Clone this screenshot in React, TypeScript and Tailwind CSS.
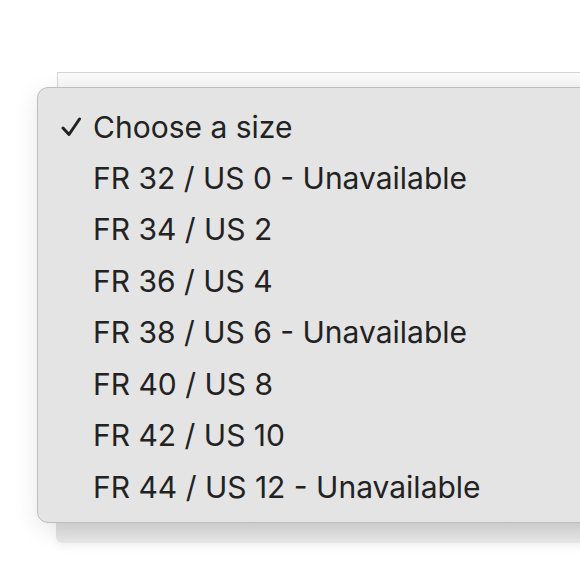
import React from "react";

const items = [
  "FR 32 / US 0 - Unavailable",
  "FR 34 / US 2",
  "FR 36 / US 4",
  "FR 38 / US 6 - Unavailable",
  "FR 40 / US 8",
  "FR 42 / US 10",
  "FR 44 / US 12 - Unavailable",
];

export default function App() {
  return (
    <div className="w-[580px] h-[580px] bg-white overflow-hidden relative" style={{ fontFamily: "Inter, 'Noto Sans', sans-serif" }}>
      <div className="absolute left-[57px] top-[72px] w-[600px] h-[40px] border border-[#d6d6d6] bg-gradient-to-b from-[#fbfbfb] to-[#f0f0f0]" />
      <div className="absolute left-[56px] top-[515px] w-[600px] h-[28px] rounded-bl-[6px] bg-gradient-to-b from-[#d6d6d6] to-[#e8e8e8] shadow-[0_4px_10px_rgba(0,0,0,0.05)]" />
      <div className="absolute left-[37px] top-[87px] w-[600px] h-[436px] rounded-[11px] border border-[#bdbdbd] bg-[#e4e4e4] shadow-[0_6px_24px_rgba(0,0,0,0.10)] pt-[19px] text-[30px] leading-[36px] text-[#222]">
        <div className="h-[39px] flex items-center">
          <span className="w-[55px] pl-[23px] flex items-center">
            <svg width="20" height="20" viewBox="0 0 20 20" fill="none">
              <path d="M2 11 L8 17.5 L18.5 2" stroke="#222" strokeWidth="3" strokeLinecap="round" strokeLinejoin="round" />
            </svg>
          </span>
          <span>Choose a size</span>
        </div>
        {items.map((t) => (
          <div key={t} className="h-[51.5px] flex items-center pl-[55px] pt-[12px]">
            {t}
          </div>
        ))}
      </div>
    </div>
  );
}
